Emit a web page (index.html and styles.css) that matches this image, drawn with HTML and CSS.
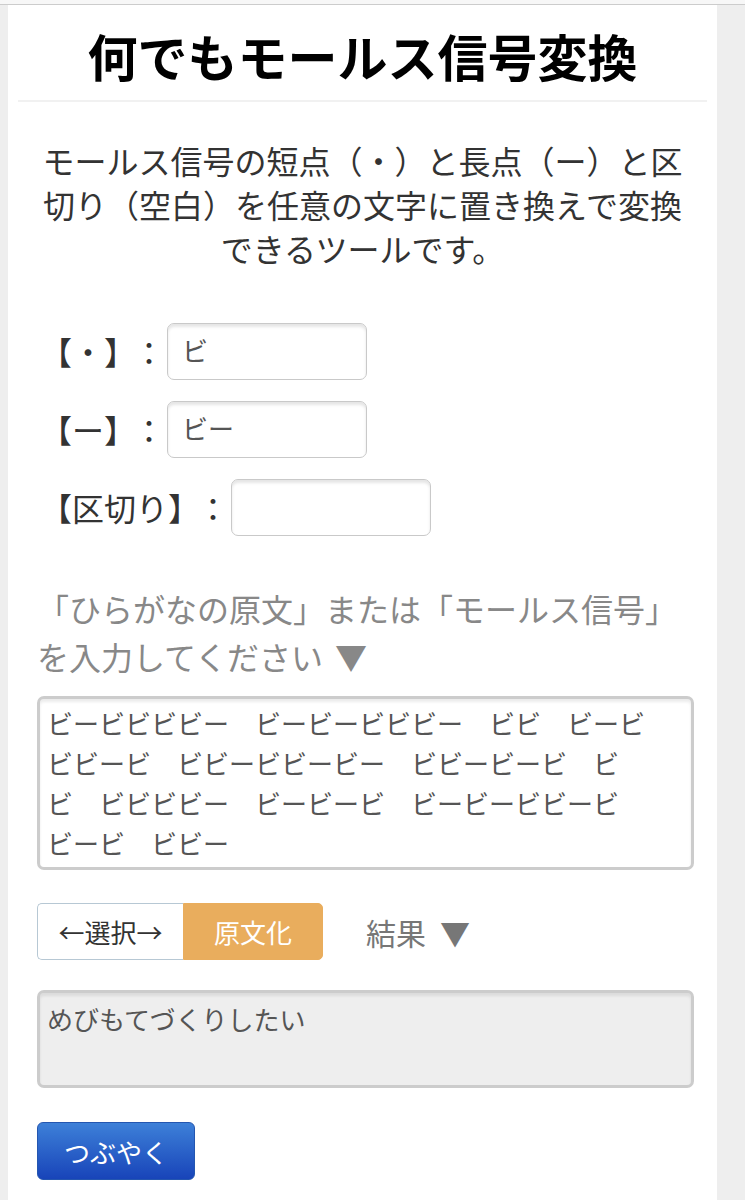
FILE: index.html
```html
<!DOCTYPE html>
<html lang="ja">
<head>
    <meta charset="UTF-8">
    <title>何でもモールス信号変換</title>

    <link rel="stylesheet" href="styles.css">

</head>
<body>
<div class="topbar"></div>
<div class="page">
    <div class="panel">
        <h1 class="title">何でもモールス信号変換</h1>
        <div class="content">
            <p class="lead">モールス信号の短点（・）と長点（ー）と区切り（空白）を任意の文字に置き換えで変換できるツールです。</p>

            <div class="settings">
                <div class="row">
                    <span class="key">【・】</span><span class="colon">：</span>
                    <input class="field" type="text" value="ビ">
                </div>
                <div class="row">
                    <span class="key">【ー】</span><span class="colon">：</span>
                    <input class="field" type="text" value="ビー">
                </div>
                <div class="row">
                    <span class="key">【区切り】</span><span class="colon">：</span>
                    <input class="field" type="text" value="">
                </div>
            </div>

            <p class="hint">「ひらがなの原文」または「モールス信号」<br>を入力してください<span class="arrow">▼</span></p>
            <textarea class="source">ビービビビビー　ビービービビビー　ビビ　ビービ
ビビービ　ビビービビービー　ビビービービ　ビ
ビ　ビビビビー　ビービービ　ビービービビービ
ビービ　ビビー</textarea>

            <div class="actions">
                <div class="toggle">
                    <button class="toggle-btn">←選択→</button>
                    <button class="toggle-btn is-active">原文化</button>
                </div>
                <span class="result-label">結果<span class="arrow">▼</span></span>
            </div>

            <textarea class="source result" readonly>めびもてづくりしたい</textarea>

            <button class="tweet">つぶやく</button>
        </div>
    </div>
</div>
</body>
</html>
```

FILE: styles.css
```css
* {
    box-sizing: border-box;
}

body {
    margin: 0;
    background-color: #eee;
    color: #333;
    font-family: "Noto Sans CJK JP", "Noto Sans", sans-serif;
}

.topbar {
    height: 5px;
    background-color: #f7f7f7;
    border-bottom: 1px solid #ccc;
}

.page {
    padding: 0 28px 0 8px;
}

.panel {
    min-height: 1195px;
    background-color: #fff;
    padding-bottom: 40px;
}

.title {
    margin: 0 10px;
    padding: 19px 0 14px;
    font-size: 50px;
    line-height: 62px;
    font-weight: bold;
    color: #000;
    text-align: center;
    border-bottom: 2px solid #f1f1f1;
}

.content {
    padding: 0 23px 0 29px;
}

.lead {
    margin: 36px 0 0;
    padding: 0 7px 0 1px;
    font-size: 32px;
    line-height: 44px;
    text-align: center;
}

.settings {
    margin-top: 53px;
}

.row {
    display: flex;
    align-items: center;
    margin-bottom: 21px;
}

.row:last-child {
    margin-bottom: 0;
}

.key {
    padding-left: 3px;
    font-size: 32px;
    line-height: 57px;
    white-space: nowrap;
}

.colon {
    margin-left: -3px;
    font-size: 32px;
    line-height: 57px;
}

.field {
    width: 200px;
    height: 57px;
    margin-left: 2px;
    padding: 0 14px 4px;
    border: 1px solid #c9c9c9;
    border-radius: 7px;
    box-shadow: inset 0 3px 3px rgba(0, 0, 0, 0.1);
    font-family: inherit;
    font-size: 26px;
    color: #555;
}

.hint {
    margin: 48px 0 0;
    font-size: 32px;
    line-height: 48px;
    color: #888;
}

.arrow {
    margin-left: 12px;
}

.source {
    display: block;
    width: 100%;
    height: 174px;
    margin-top: 16px;
    padding: 4px 7px;
    border: 3px solid #ccc;
    border-radius: 7px;
    box-shadow: inset 0 3px 3px rgba(0, 0, 0, 0.08);
    font-family: inherit;
    font-size: 26px;
    line-height: 40px;
    color: #555;
    resize: none;
    overflow: hidden;
}

.actions {
    display: flex;
    align-items: center;
    margin-top: 33px;
}

.toggle {
    display: flex;
    height: 57px;
}

.toggle-btn {
    width: 146px;
    border: 1px solid #b7c8d4;
    border-right: none;
    border-radius: 5px 0 0 5px;
    background-color: #fff;
    font-family: inherit;
    font-size: 26px;
    color: #333;
    padding: 0;
}

.toggle-btn.is-active {
    width: 140px;
    border: 1px solid #e9ad5d;
    border-radius: 0 5px 5px 0;
    background-color: #e9ad5d;
    color: #fff;
}

.result-label {
    margin-left: 43px;
    font-size: 30px;
    color: #777;
}

.result-label .arrow {
    margin-left: 14px;
}

.result {
    height: 98px;
    margin-top: 30px;
    padding-top: 6px;
    background-color: #eee;
}

.tweet {
    display: block;
    height: 58px;
    margin-top: 34px;
    padding: 0 26px;
    border: 1px solid #2456b0;
    border-radius: 6px;
    background: linear-gradient(#3d80d8, #1844b9);
    font-family: inherit;
    font-size: 26px;
    color: #fff;
}
```
